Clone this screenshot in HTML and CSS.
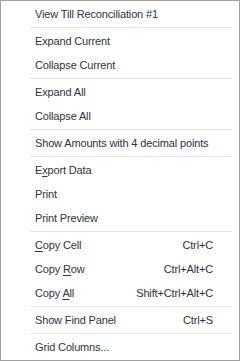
FILE: index.html
```html
<!DOCTYPE html>
<html lang="en">

<head>
    <meta charset="UTF-8">
    <meta name="viewport" content="width=device-width, initial-scale=1.0">
    <title>Grid Menu</title>
    <link rel="stylesheet" href="styles.css">
</head>

<body>

    <div class="menu">
        <div class="item"><span class="label">View Till Reconciliation #1</span></div>
        <div class="sep"></div>
        <div class="item"><span class="label">Expand Current</span></div>
        <div class="item"><span class="label">Collapse Current</span></div>
        <div class="sep"></div>
        <div class="item"><span class="label">Expand All</span></div>
        <div class="item"><span class="label">Collapse All</span></div>
        <div class="sep"></div>
        <div class="item"><span class="label">Show Amounts with 4 decimal points</span></div>
        <div class="sep"></div>
        <div class="item"><span class="label">E<u>x</u>port Data</span></div>
        <div class="item"><span class="label">Print</span></div>
        <div class="item"><span class="label">Print Preview</span></div>
        <div class="sep"></div>
        <div class="item"><span class="label"><u>C</u>opy Cell</span><span class="key">Ctrl+C</span></div>
        <div class="item"><span class="label">Copy <u>R</u>ow</span><span class="key">Ctrl+Alt+C</span></div>
        <div class="item"><span class="label">Copy <u>A</u>ll</span><span class="key">Shift+Ctrl+Alt+C</span></div>
        <div class="sep"></div>
        <div class="item"><span class="label">Show Find Panel</span><span class="key">Ctrl+S</span></div>
        <div class="sep"></div>
        <div class="item"><span class="label">Grid Columns...</span></div>
    </div>

</body>

</html>
```

FILE: styles.css
```css
* {
    box-sizing: border-box;
    margin: 0;
    padding: 0;
}

body {
    background-color: #ffffff;
    font-family: 'Liberation Sans', Arial, sans-serif;
    font-size: 11px;
    letter-spacing: -0.15px;
    color: #30333f;
}

.menu {
    width: 240px;
    height: 361px;
    border: 1px solid #a0a0a0;
    padding: 1px 0;
    background-color: #ffffff;
    display: flex;
    flex-direction: column;
}

.item {
    height: 24px;
    display: flex;
    align-items: center;
    justify-content: space-between;
    padding: 0 26px 0 34px;
}

.item u {
    text-decoration-thickness: 1px;
    text-underline-offset: 2px;
}

.sep {
    height: 1px;
    margin: 1px 7px 1px 29px;
    background-color: #e3e3e3;
}
```
